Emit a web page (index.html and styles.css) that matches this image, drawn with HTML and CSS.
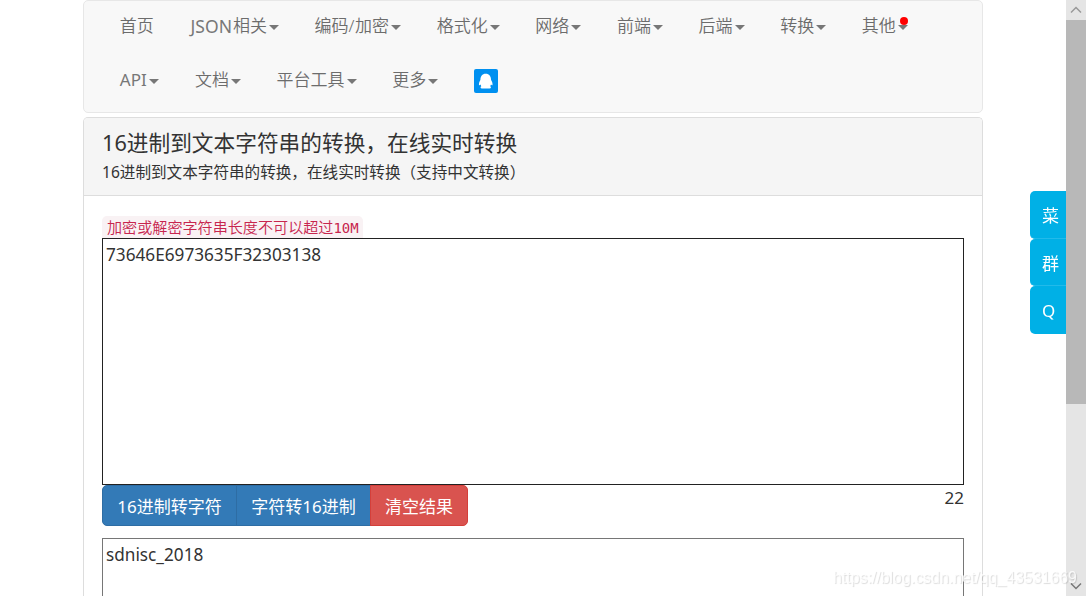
FILE: index.html
```html
<!DOCTYPE html>
<html lang="zh-CN">
<head>
    <meta charset="UTF-8">
    <meta name="viewport" content="width=device-width, initial-scale=1.0">
    <title>16进制到文本字符串的转换</title>
    <link rel="stylesheet" href="styles.css">
</head>
<body>
    <div class="container">
        <nav class="navbar">
            <ul class="nav">
                <li><a>首页</a></li>
                <li><a><span class="json">JSON</span>相关<b class="caret"></b></a></li>
                <li><a>编码<span class="slash">/</span>加密<b class="caret"></b></a></li>
                <li><a>格式化<b class="caret"></b></a></li>
                <li><a>网络<b class="caret"></b></a></li>
                <li><a>前端<b class="caret"></b></a></li>
                <li><a>后端<b class="caret"></b></a></li>
                <li><a>转换<b class="caret"></b></a></li>
                <li><a>其他<b class="caret"></b><i class="dot"></i></a></li>
            </ul>
            <ul class="nav">
                <li><a><span class="api">API</span><b class="caret"></b></a></li>
                <li><a>文档<b class="caret"></b></a></li>
                <li><a>平台工具<b class="caret"></b></a></li>
                <li><a>更多<b class="caret"></b></a></li>
                <li>
                    <a>
                        <svg class="qq" viewBox="0 0 24 24">
                            <rect width="24" height="24" rx="2" fill="#0090f0"/>
                            <path d="M11.700 4.800C8.200 4.800 6.400 7.500 6.400 11C5.400 12.500 4.700 14.500 5 16.200C5.400 16.600 6 16 6.500 15.500L7.300 17.200C6.200 17.700 6.200 19.500 8 19.500H15.600C17.300 19.500 17.300 17.700 16.200 17.200L17 15.500C17.500 16 18.100 16.600 18.500 16.200C18.800 14.500 18.100 12.500 17.100 11C17.100 7.500 15.200 4.800 11.700 4.800Z" fill="#fff"/>
                        </svg>
                    </a>
                </li>
            </ul>
        </nav>

        <div class="panel">
            <div class="panel-heading">
                <h1>16进制到文本字符串的转换，在线实时转换</h1>
                <p>16进制到文本字符串的转换，在线实时转换（支持中文转换）</p>
            </div>
            <div class="panel-body">
                <code>加密或解密字符串长度不可以超过<span class="limit">10M</span></code>
                <textarea class="source" spellcheck="false">73646E6973635F32303138</textarea>
                <div class="toolbar">
                    <div class="btn-group">
                        <button class="btn">16进制转字符</button>
                        <button class="btn">字符转16进制</button>
                        <button class="btn btn-danger">清空结果</button>
                    </div>
                    <span class="count">22</span>
                </div>
                <textarea class="result" spellcheck="false">sdnisc_2018</textarea>
            </div>
        </div>
    </div>

    <div class="side-menu">
        <a>菜</a>
        <a>群</a>
        <a>Q</a>
    </div>

    <div class="scrollbar">
        <svg class="arrow" viewBox="0 0 20 20"><path d="M5 12.500L10 7.500L15 12.500"/></svg>
        <div class="thumb"></div>
        <svg class="arrow down" viewBox="0 0 20 20"><path d="M5 7.500L10 12.500L15 7.500"/></svg>
    </div>

    <div class="watermark">https://blog.csdn.net/qq_43531669</div>
</body>
</html>
```

FILE: styles.css
```css
* {
    box-sizing: border-box;
}

body {
    margin: 0;
    height: 596px;
    overflow: hidden;
    font-family: "Noto Sans", "Noto Sans CJK SC", sans-serif;
    font-size: 17px;
    color: #333;
    background: #fff;
}

.container {
    display: flex;
    flex-direction: column;
    gap: 4px;
    width: 900px;
    height: 596px;
    margin-left: 83px;
}

/* 导航 */
.navbar {
    flex: none;
    height: 113px;
    padding: 0 18px;
    border: 1px solid #e7e7e7;
    border-radius: 5px;
    background: #f8f8f8;
}

.nav {
    display: flex;
    margin: 0;
    padding: 0;
    list-style: none;
}

.nav a {
    position: relative;
    display: flex;
    align-items: center;
    height: 54px;
    padding: 0 17.82px 4px;
    line-height: 24px;
    color: #6c6c6c;
    font-weight: 350;
    white-space: nowrap;
}

.json,
.api {
    color: #777;
    font-weight: 400;
}

.json {
    width: 43.5px;
    padding-left: 1px;
    font-size: 17.5px;
    letter-spacing: 0.1px;
}

.slash {
    width: 6.5px;
}

.api {
    width: 27.5px;
}

.caret {
    margin: 3px 0 0 2px;
    border-top: 5px solid #777;
    border-left: 5px solid transparent;
    border-right: 5px solid transparent;
}

.dot {
    position: absolute;
    top: 16px;
    right: 18px;
    width: 8px;
    height: 8px;
    border-radius: 50%;
    background: #f00;
}

.qq {
    display: block;
    width: 24px;
    height: 24px;
    margin-top: 2px;
}

/* 面板 */
.panel {
    display: flex;
    flex: 1;
    flex-direction: column;
    min-height: 0;
    border: 1px solid #ddd;
    border-bottom: 0;
    border-radius: 5px 5px 0 0;
}

.panel-heading {
    flex: none;
    height: 78px;
    padding: 10px 18px 0;
    border-bottom: 1px solid #ddd;
    border-radius: 4px 4px 0 0;
    background: #f5f5f5;
}

.panel-heading h1 {
    margin: 0;
    font-size: 21.7px;
    font-weight: 400;
    line-height: 29px;
}

.panel-heading p {
    margin: 0;
    font-size: 15.6px;
    line-height: 30px;
}

.panel-body {
    display: flex;
    flex: 1;
    flex-direction: column;
    min-height: 0;
    padding: 20px 18px 0;
}

code {
    flex: none;
    width: 261px;
    height: 22px;
    padding-left: 5px;
    border-radius: 5px 5px 0 0;
    background: #f9f2f4;
    color: #c7254e;
    font-family: "Noto Sans CJK SC", sans-serif;
    font-size: 15.1px;
    font-weight: 350;
    line-height: 21px;
    white-space: nowrap;
}

.limit {
    font-family: "DejaVu Sans Mono", "Liberation Mono", monospace;
    font-size: 14px;
}

textarea {
    display: block;
    width: 862px;
    padding: 3px;
    border: 1px solid #767676;
    border-radius: 0;
    outline: none;
    resize: none;
    overflow: hidden;
    color: #333;
    font-family: "Noto Sans", "Noto Sans CJK SC", sans-serif;
    font-size: 17.2px;
    line-height: 25px;
}

.source {
    flex: none;
    height: 247px;
    border-color: #222;
}

.result {
    flex: 1;
    min-height: 0;
    border-bottom: 0;
}

.toolbar {
    display: flex;
    flex: none;
    justify-content: space-between;
    height: 53px;
}

.btn-group {
    display: flex;
    height: 41px;
}

.btn {
    width: 135px;
    padding: 0;
    border: 1px solid #2e6da4;
    background: #337ab7;
    color: #fff;
    font-family: inherit;
    font-size: 17px;
    white-space: nowrap;
}

.btn + .btn {
    margin-left: -1px;
}

.btn:first-child {
    border-radius: 5px 0 0 5px;
}

.btn-danger {
    width: 98px;
    border-color: #d43f3a;
    border-radius: 0 5px 5px 0;
    background: #d9534f;
}

.count {
    line-height: 25px;
}

/* 右侧悬浮菜单 */
.side-menu {
    position: fixed;
    top: 191px;
    right: 20px;
    width: 36px;
}

.side-menu a {
    display: block;
    height: 47.7px;
    padding-left: 12px;
    border-bottom: 1px solid #22baea;
    border-radius: 5px 0 0 5px;
    background: #00b0e6;
    color: #fff;
    line-height: 49px;
}

.side-menu a:last-child {
    border-bottom: 0;
}

.scrollbar {
    position: fixed;
    top: 0;
    right: 0;
    display: flex;
    flex-direction: column;
    width: 20px;
    height: 596px;
    background: #e5e5e5;
}

.arrow {
    width: 20px;
    height: 20px;
    fill: none;
    stroke: #999;
    stroke-width: 1.5;
}

.down {
    margin-top: auto;
    stroke: #777;
}

.thumb {
    height: 384px;
    background: #b8b8b8;
}

.watermark {
    position: fixed;
    top: 568px;
    left: 833px;
    color: rgba(255, 255, 255, 0.8);
    font-family: "Liberation Sans", sans-serif;
    font-size: 15.9px;
    line-height: 20px;
    text-shadow: 1px 1px 1px rgba(0, 0, 0, 0.14);
    white-space: nowrap;
}
```
